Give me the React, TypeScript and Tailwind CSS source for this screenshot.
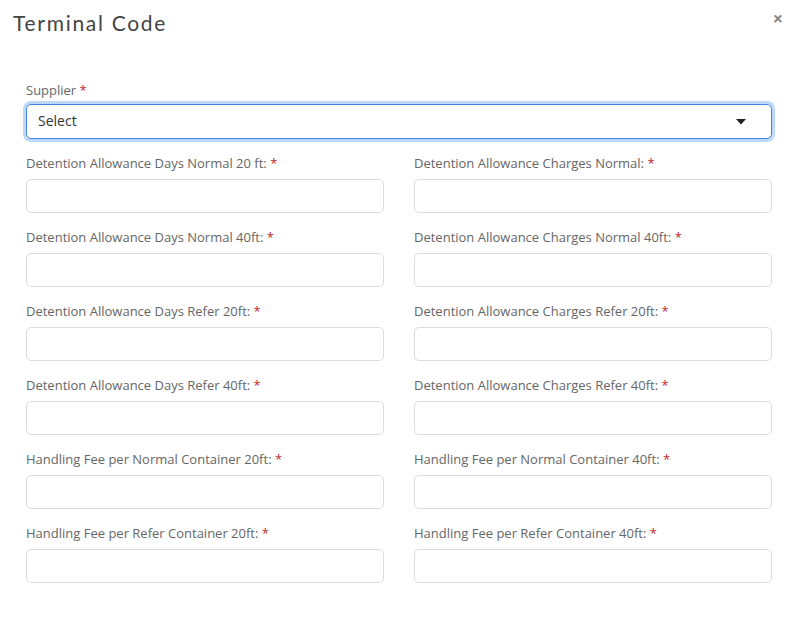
const fields: [string, string][] = [
  ["Detention Allowance Days Normal 20 ft:", "Detention Allowance Charges Normal:"],
  ["Detention Allowance Days Normal 40ft:", "Detention Allowance Charges Normal 40ft:"],
  ["Detention Allowance Days Refer 20ft:", "Detention Allowance Charges Refer 20ft:"],
  ["Detention Allowance Days Refer 40ft:", "Detention Allowance Charges Refer 40ft:"],
  ["Handling Fee per Normal Container 20ft:", "Handling Fee per Normal Container 40ft:"],
  ["Handling Fee per Refer Container 20ft:", "Handling Fee per Refer Container 40ft:"],
]

function Label({ text }: { text: string }) {
  return (
    <label className="block text-[13px] leading-[18px] text-[#666]">
      {text} <span className="text-[#c0262d]">*</span>
    </label>
  )
}

function Field({ label }: { label: string }) {
  return (
    <div>
      <Label text={label} />
      <input
        type="text"
        className="mt-[7px] block h-[34px] w-full rounded-[5px] border border-[#dcdcdc] bg-white px-3 text-[14px] outline-none"
      />
    </div>
  )
}

export default function App() {
  return (
    <div className="h-[636px] w-[797px] bg-white font-['Open_Sans',sans-serif] text-[#333]">
      <div className="flex items-start justify-between pl-[13px] pr-[14px] pt-[9px]">
        <h1 className="font-['Lato',sans-serif] text-[21px] leading-[28px] tracking-[1.7px] text-[#444]">
          Terminal Code
        </h1>
        <button className="text-[18px] leading-[18px] font-bold text-[#888]">×</button>
      </div>

      <div className="pl-[26px] pr-[25px] pt-[44px]">
        <Label text="Supplier" />
        <div className="mt-[5px] flex h-[35px] items-center justify-between rounded-[5px] border border-[#3d86e6] px-[11px] shadow-[0_0_0_3px_#bcd8f9]">
          <span className="-mt-[2px] text-[14px] text-[#333]">Select</span>
          <svg width="10" height="6" viewBox="0 0 10 6" className="mr-[14px]">
            <path d="M0 0h10L5 5.5z" fill="#222" />
          </svg>
        </div>

        <div className="mt-[15px] grid grid-cols-2 gap-x-[30px] gap-y-[15px]">
          {fields.map(([l, r]) => (
            <div key={l} className="contents">
              <Field label={l} />
              <Field label={r} />
            </div>
          ))}
        </div>
      </div>
    </div>
  )
}
